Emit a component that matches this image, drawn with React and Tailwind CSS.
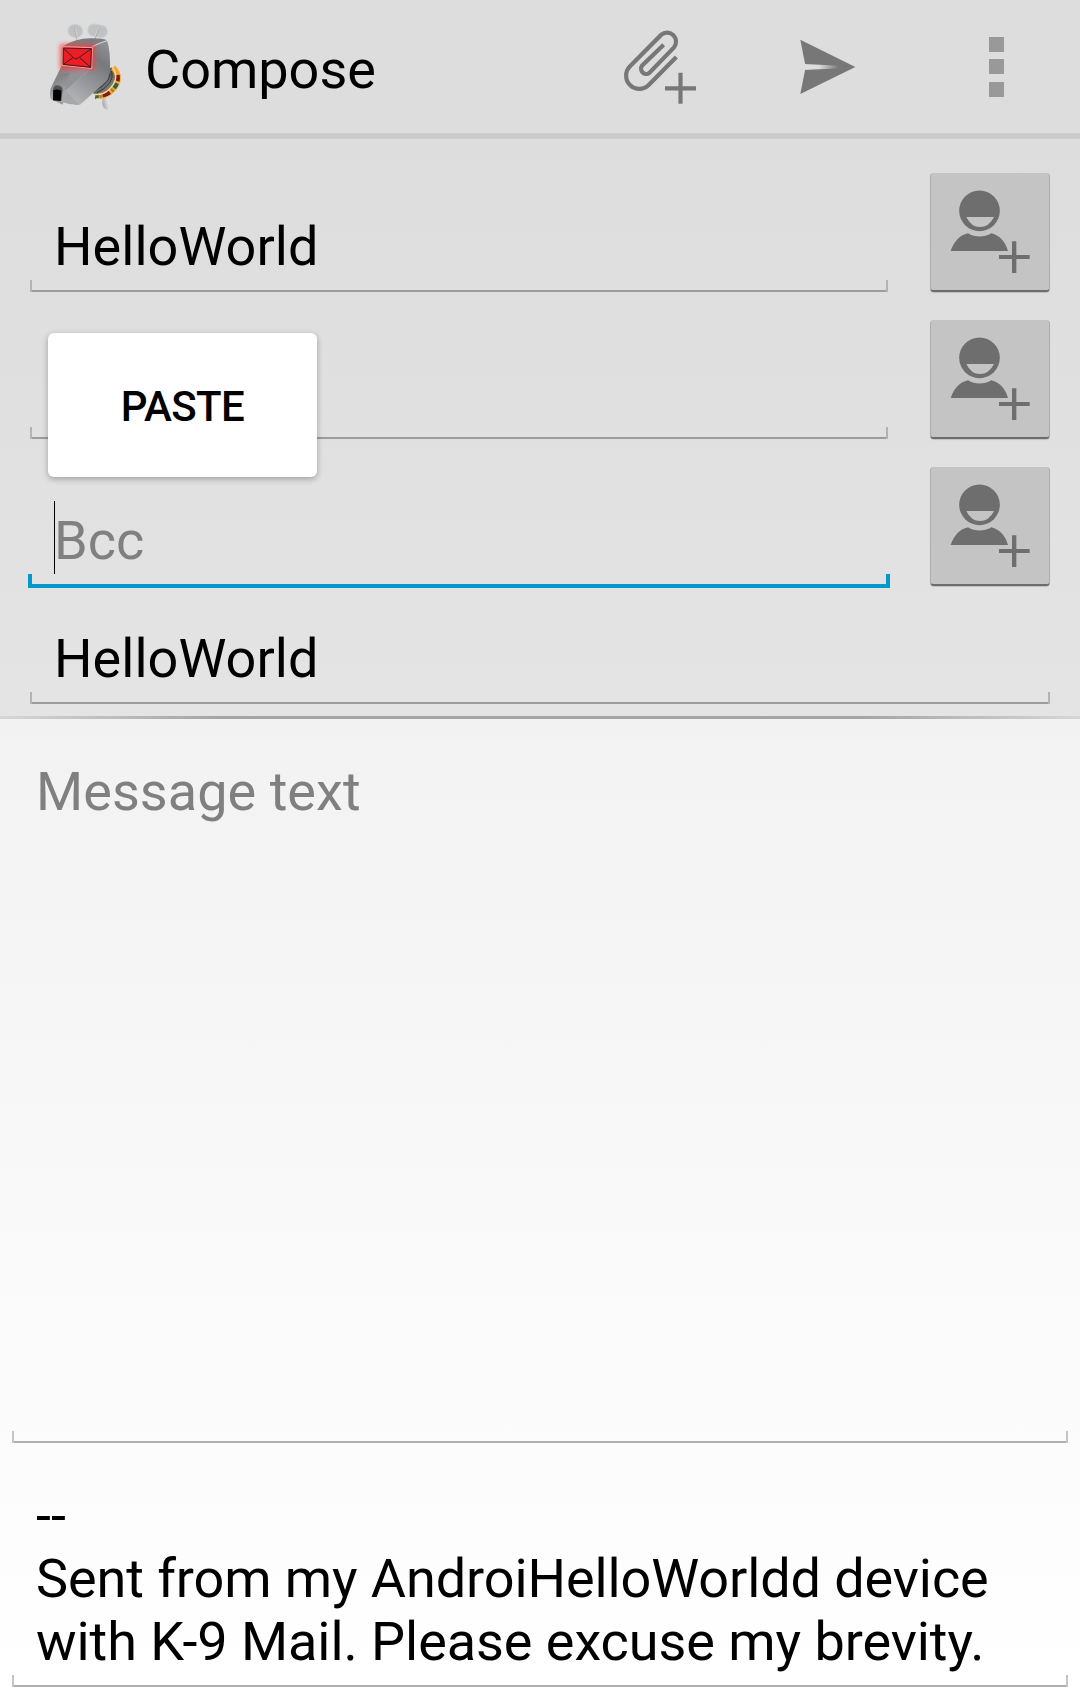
import React from "react";

function DogLogo() {
  return (
    <svg className="h-[100px] w-[90px] shrink-0" viewBox="0 0 270 300">
      <defs>
        <linearGradient id="face" x1="0" y1="0" x2="1" y2="0.6">
          <stop offset="0" stopColor="#77797b" />
          <stop offset="0.5" stopColor="#929496" />
          <stop offset="1" stopColor="#a9abad" />
        </linearGradient>
        <linearGradient id="side" x1="0.85" y1="0" x2="0.35" y2="1">
          <stop offset="0" stopColor="#909295" />
          <stop offset="0.3" stopColor="#77797c" />
          <stop offset="0.55" stopColor="#8b8d90" />
          <stop offset="1" stopColor="#b0b2b4" />
        </linearGradient>
        <linearGradient id="snout" x1="0.3" y1="0" x2="0.6" y2="1">
          <stop offset="0" stopColor="#77797b" />
          <stop offset="0.45" stopColor="#929496" />
          <stop offset="1" stopColor="#b7b9bb" />
        </linearGradient>
        <linearGradient id="neck" x1="0" y1="0" x2="1" y2="1">
          <stop offset="0" stopColor="#3f4042" />
          <stop offset="1" stopColor="#8b8d8f" />
        </linearGradient>
        <linearGradient id="tag" x1="0" y1="0" x2="1" y2="0">
          <stop offset="0" stopColor="#a4a6a8" />
          <stop offset="1" stopColor="#e8e8e8" />
        </linearGradient>
        <filter id="glow" x="-40%" y="-40%" width="180%" height="180%">
          <feGaussianBlur stdDeviation="6" />
        </filter>
      </defs>
      <ellipse cx="197" cy="266" rx="10" ry="18" transform="rotate(-14 197 266)" fill="url(#tag)" />
      <path d="M206 160 L220 156 Q236 196 208 226 Q186 244 162 238 L154 222Z" fill="url(#neck)" />
      <path d="M209 166 Q218 200 162 228 M215 168 Q226 206 170 234" fill="none" stroke="#292a2b" strokeWidth="2.5" />
      <g fill="none" strokeWidth="17">
        <path d="M219 158 C236 172 237 194 225 213 C211 234 190 246 166 243" stroke="#eaa631" />
        <path d="M219 158 C236 172 237 194 225 213 C211 234 190 246 166 243" stroke="#7c1d1d" pathLength="100" strokeDasharray="0 20 14 31 18 17" />
        <path d="M219 158 C236 172 237 194 225 213 C211 234 190 246 166 243" stroke="#28664a" pathLength="100" strokeDasharray="0 39 12 41 8 0" />
        <path d="M219 158 C236 172 237 194 225 213 C211 234 190 246 166 243" stroke="#b87912" pathLength="100" strokeDasharray="0 55 5 25 5 10" />
      </g>
      <path d="M215 154 C230 171 231 193 219 210 C205 230 184 241 163 238" fill="none" stroke="#f9d793" strokeWidth="4" />
      <path d="M222 152 C244 168 247 196 233 218 C218 241 193 253 168 250" fill="none" stroke="#f3bd5f" strokeWidth="3" />
      <g fill="#c0c1c2" stroke="#d0d1d1" strokeWidth="3">
        <rect x="84" y="29" width="44" height="38" rx="18" transform="rotate(5 106 48)" />
        <rect x="143" y="29" width="60" height="37" rx="18" transform="rotate(11 173 47)" />
      </g>
      <path d="M104 38 L112 78 M177 39 L162 79" fill="none" stroke="#aaabac" strokeWidth="4" />
      <path d="M106 39 L114 79 M175 38 L160 78" fill="none" stroke="#e1e2e2" strokeWidth="2" />
      <path d="M71 93 Q108 70 150 70 Q190 69 201 76 L156 96Z" fill="#7c7e81" />
      <path d="M201 76 Q212 106 210 171 L202 196 L120 269 L104 269 L76 226 L156 158 L157 96Z" fill="url(#side)" />
      <path d="M66 151 L156 158 L77 226 L68 269 L33 252 L32 222 Q42 198 66 151Z" fill="url(#face)" />
      <path d="M32 222 L60 180 Q84 170 91 176 L76 226 L67 262 L32 252 Q28 236 32 222Z" fill="url(#snout)" />
      <path d="M77 225 L117 270 Q92 270 64 261 L67 225Z" fill="#a5a7a9" />
      <path d="M91 173 Q78 190 76 225 L156 158Z" fill="#919396" />
      <path d="M156 95 Q177 84 201 77" fill="none" stroke="#d7d8d9" strokeWidth="3" />
      <rect x="60" y="88" width="104" height="76" rx="4" fill="#ff3840" opacity="0.75" filter="url(#glow)" />
      <path d="M69 96 L157 98 L155 160 L67 151Z" fill="#ef1c25" stroke="#ffb0a5" strokeWidth="2.5" />
      <path d="M70 99 L154 101 L152 157 L69 148Z" fill="#ef1c25" stroke="#39201f" strokeWidth="3" />
      <path d="M71 100 L100 128 Q108 137 116 128 L153 102 M70 148 L99 128 M151 156 L119 128" fill="none" stroke="#39201f" strokeWidth="3" />
      <path d="M39 257 L39 225 Q40 211 52 211 Q67 212 68 225 L64 258Z" fill="#515253" />
      <path d="M39 255 L40 226 Q52 221 64 227 L62 258Z" fill="#000" />
    </svg>
  );
}

function AttachIcon() {
  return (
    <svg className="h-[78px] w-[76px] shrink-0" viewBox="66 54 228 234" fill="none" stroke="#777" strokeWidth="12.500">
      <path d="M229 141 L146 225 A39.5 39.5 0 0 1 90 169 L184 74 A27 27 0 0 1 222 112 L148 189 A15.8 15.8 0 0 1 126 167 L191 104" />
      <path d="M195 235 H288 M241.500 188 V281" />
    </svg>
  );
}

function SendIcon() {
  return (
    <svg className="h-[56px] w-[57px] shrink-0" viewBox="600 87 171 168">
      <defs>
        <linearGradient id="slot" gradientUnits="userSpaceOnUse" x1="655" y1="0" x2="718" y2="0">
          <stop offset="0" stopColor="#dddddd" />
          <stop offset="1" stopColor="#777777" />
        </linearGradient>
      </defs>
      <path d="M601 89 L766 171 L601 252 L617 171Z" fill="#777" />
      <path d="M612 162 L720 167 V175 L612 180Z" fill="url(#slot)" />
    </svg>
  );
}

function ContactButton() {
  return (
    <button className="h-[119px] w-[120px] shrink-0 rounded-[4px] border-x border-b-2 border-x-[#adadad] border-b-[#6c6c6c] bg-[#c4c4c4] shadow-[0_1px_1px_rgba(0,0,0,0.15)]">
      <svg className="-ml-px h-[117px] w-[120px]" viewBox="90 490 360 351" fill="#6e6e6e">
        <circle cx="238.500" cy="603.500" r="61" />
        <path d="M199 622 H282 Q267 652 240 652 Q213 652 199 622Z" fill="#c4c4c4" />
        <path d="M152 724 C161 698 178 676 204 671 C225 684 252 684 274 671 C300 677 318 700 324 724Z" />
        <path d="M297 736 H336 V695 H349 V736 H389 V748 H349 V790 H336 V748 H297Z" />
      </svg>
    </button>
  );
}

function Underline({ light }) {
  const tick = light ? "w-[2px] bg-[#c5c5c5]" : "w-[2px] bg-[#b3b3b3]";
  const line = light ? "h-[2px] flex-1 self-end bg-[#afafaf]" : "h-[2px] flex-1 self-end bg-[#9c9c9c]";
  return (
    <div className="flex h-[12px]">
      <div className={tick} />
      <div className={line} />
      <div className={tick} />
    </div>
  );
}

function RecipientRow({ children, focused }) {
  return (
    <div className="flex h-[147px] items-end justify-between pr-[30px] pl-[30px]">
      <div className="w-[858px]">
        {children}
        {focused ? (
          <div className="-mx-[2px] -mb-[2px] flex h-[14px]">
            <div className="w-[4px] bg-[#0099cc]" />
            <div className="h-[4px] flex-1 self-end bg-[#0099cc]" />
            <div className="w-[4px] bg-[#0099cc]" />
          </div>
        ) : (
          <Underline />
        )}
      </div>
      <ContactButton />
    </div>
  );
}

export default function App() {
  return (
    <div className="flex h-[1699px] w-[1080px] flex-col overflow-hidden bg-white font-['Roboto',sans-serif] text-[54px] leading-[63px] text-black">
      <header className="flex h-[139px] shrink-0 border-b-[6px] border-[#cbcbcb] bg-[#dddddd] pt-[15px] pl-[40px]">
        <DogLogo />
        <h1 className="mt-[23px] ml-[15px] w-[477px]">Compose</h1>
        <div className="mt-[13px]"><AttachIcon /></div>
        <div className="mt-[24px] ml-[102px]"><SendIcon /></div>
        <div className="mt-[22px] ml-[132px] flex flex-col">
          <div className="size-[15px] bg-[#999]" />
          <div className="mt-[7px] size-[15px] bg-[#999]" />
          <div className="mt-[8px] size-[15px] bg-[#999]" />
        </div>
      </header>

      <section className="relative h-[577px] shrink-0 bg-linear-to-b from-[#dddddd] to-[#e4e4e4] pt-[6px]">
        <RecipientRow>
          <div className="mb-[2px] pl-[24px] tracking-[0.05px]">HelloWorld</div>
        </RecipientRow>
        <RecipientRow />
        <RecipientRow focused>
          <div className="flex h-[73px] pl-[24px]">
            <div className="w-px bg-black" />
            <div className="-ml-px pt-[8px] text-[#808080]">Bcc</div>
          </div>
        </RecipientRow>
        <div className="flex h-[118px] flex-col justify-end px-[30px]">
          <div className="mb-[2px] pl-[24px] tracking-[0.05px]">HelloWorld</div>
          <Underline />
        </div>
        <div className="absolute top-[194px] left-[48px] flex h-[144px] w-[269px] items-center justify-center rounded-[6px] bg-white pt-[2px] text-[42px] font-medium tracking-[-0.6px] shadow-[0_2px_6px_rgba(0,0,0,0.3)]">
          PASTE
        </div>
      </section>
      <div className="h-[3px] shrink-0 bg-linear-to-r from-[#d6d6d6] from-0% via-[#a5a5a5] via-20% to-[#a5a5a5] to-80%">
        <div className="ml-[864px] h-[3px] bg-linear-to-r from-[#a5a5a5] to-[#d6d6d6]" />
      </div>

      <main className="flex-1 bg-linear-to-b from-[#f2f2f2] via-[#fbfbfb] via-65% to-white px-[12px]">
        <div className="flex h-[724px] flex-col justify-between pt-[41px]">
          <div className="pl-[24px] tracking-[0.05px] text-[#808080]">Message text</div>
          <Underline light />
        </div>
        <div className="flex h-[244px] flex-col justify-between pt-[41px]">
          <div className="pl-[24px] whitespace-nowrap">
            --<br />
            <span className="tracking-[-0.09px]">Sent from my AndroiHelloWorldd device</span><br />
            <span className="tracking-[-0.05px]">with K-9 Mail. Please excuse my brevity.</span>
          </div>
          <Underline light />
        </div>
      </main>
    </div>
  );
}
